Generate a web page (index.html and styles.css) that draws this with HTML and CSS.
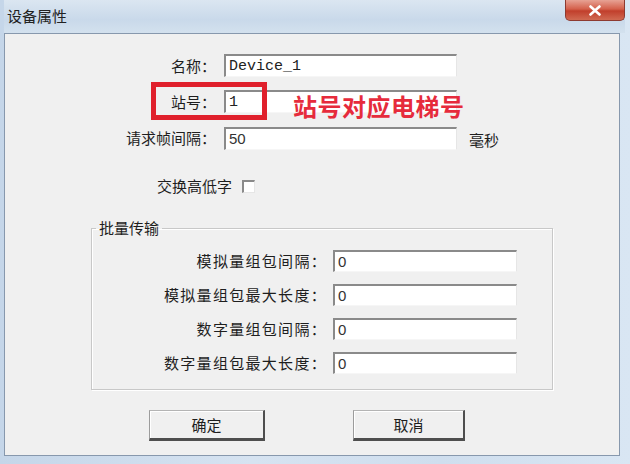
FILE: index.html
```html
<!DOCTYPE html>
<html lang="zh-CN">
<head>
  <meta charset="UTF-8">
  <title>设备属性</title>
  <link rel="stylesheet" href="styles.css">
</head>
<body>
  <div class="window">
    <div class="titlebar">
      <span class="title">设备属性</span>
      <button class="close" type="button">
        <svg width="14" height="11" viewBox="0 0 14 11"><path d="M2.5 1.5 L11.5 9.5 M11.5 1.5 L2.5 9.5" stroke="#fff" stroke-width="2.6" stroke-linecap="round"/></svg>
      </button>
    </div>
    <div class="client">
      <div class="form-top">
        <label class="label">名称：</label>
        <input class="field mono" type="text" value="Device_1">
        <span></span>

        <label class="label">站号：</label>
        <input class="field mono" type="text" value="1">
        <span></span>

        <label class="label">请求帧间隔：</label>
        <input class="field" type="text" value="50">
        <span class="unit">毫秒</span>

        <!-- annotation drawn over the dialog -->
        <div class="mark-box"></div>
        <div class="mark-text">站号对应电梯号</div>
      </div>

      <div class="swap-row">
        <span>交换高低字</span>
        <span class="check"></span>
      </div>

      <fieldset class="group">
        <legend>批量传输</legend>
        <div class="group-grid">
          <label class="label wide">模拟量组包间隔：</label>
          <input class="field" type="text" value="0">
          <label class="label wide">模拟量组包最大长度：</label>
          <input class="field" type="text" value="0">
          <label class="label wide">数字量组包间隔：</label>
          <input class="field" type="text" value="0">
          <label class="label wide">数字量组包最大长度：</label>
          <input class="field" type="text" value="0">
        </div>
      </fieldset>

      <div class="actions">
        <button class="btn ok" type="button">确定</button>
        <button class="btn cancel" type="button">取消</button>
      </div>
    </div>
  </div>
</body>
</html>
```

FILE: styles.css
```css
body {
  margin: 0;
  width: 630px;
  height: 464px;
  overflow: hidden;
  font-family: "Noto Sans CJK SC", "Liberation Sans", sans-serif;
  color: #1e1e1e;
}

.window {
  width: 630px;
  height: 464px;
  box-sizing: border-box;
  display: flex;
  flex-direction: column;
  padding: 0 10px 8px 4px;
  background: linear-gradient(90deg, #c5d6e9 0%, #d6e3f1 40%, #cfdeee 70%, #d9e6f3 100%);
}

.titlebar {
  height: 33px;
  display: flex;
  justify-content: space-between;
  align-items: flex-start;
  margin-right: -5px;
  background: linear-gradient(180deg, #dbe6f1 0%, #c9d9ea 60%, #d3e1ee 100%);
}

.title {
  margin: 6px 0 0 3px;
  font-size: 15px;
  line-height: 20px;
  color: #222;
}

.close {
  width: 60px;
  height: 21px;
  padding: 0;
  border: 1px solid #8d3a30;
  border-top: none;
  border-radius: 0 0 5px 5px;
  background: linear-gradient(180deg, #e7a294 0%, #d4604b 45%, #c13f2c 55%, #d06a52 100%);
  display: flex;
  align-items: center;
  justify-content: center;
}

.client {
  flex: 1;
  background: #f0f0f0;
  border: 1px solid #8798ad;
}

.label {
  font-size: 15px;
  line-height: 20px;
  text-align: right;
  white-space: nowrap;
  margin-right: -4px;
}

.label.wide {
  letter-spacing: 1.3px;
}

.field {
  box-sizing: border-box;
  height: 23px;
  margin: 0;
  padding: 0 0 0 3px;
  background: #fff;
  border-top: 2px solid #8a8a8a;
  border-left: 2px solid #8a8a8a;
  border-right: 1px solid #e6e6e6;
  border-bottom: 1px solid #f6f6f6;
  font-family: "Liberation Sans", sans-serif;
  font-size: 15px;
  color: #333;
  outline: none;
}

.field.mono {
  font-family: "Liberation Mono", monospace;
  color: #222;
}

.form-top {
  position: relative;
  display: grid;
  grid-template-columns: 207px 233px auto;
  column-gap: 12px;
  row-gap: 13px;
  align-items: center;
  padding-top: 20px;
}

.unit {
  font-size: 15px;
  line-height: 20px;
  padding-top: 4px;
}

.mark-box {
  position: absolute;
  left: 146px;
  top: 48px;
  width: 116px;
  height: 38px;
  box-sizing: border-box;
  border: 5px solid #e0202c;
}

.mark-text {
  position: absolute;
  left: 288px;
  top: 57px;
  font-size: 24px;
  line-height: 30px;
  font-weight: bold;
  color: #e62b3c;
  letter-spacing: 0.5px;
}

.swap-row {
  display: flex;
  align-items: center;
  gap: 10px;
  margin: 26px 0 0 152px;
  font-size: 15px;
  line-height: 20px;
}

.check {
  width: 10px;
  height: 10px;
  background: #fff;
  border-top: 2px solid #8a8a8a;
  border-left: 2px solid #8a8a8a;
  border-right: 1px solid #e6e6e6;
  border-bottom: 1px solid #e6e6e6;
}

.group {
  width: 462px;
  box-sizing: border-box;
  margin: 22px 0 0 86px;
  padding: 12px 0 15px 0;
  border: 1px solid #c8c8c8;
  box-shadow: inset 1px 1px #fff, 1px 1px #fff;
}

.group legend {
  margin-left: 4px;
  padding: 0 3px;
  font-size: 15px;
  line-height: 20px;
}

.group-grid {
  display: grid;
  grid-template-columns: 231px 184px;
  column-gap: 10px;
  row-gap: 12px;
  align-items: center;
}

.group-grid .field {
  height: 22px;
}

.actions {
  display: flex;
  gap: 88px;
  margin: 20px 0 0 144px;
}

.btn {
  height: 31px;
  padding: 0;
  background: #f0f0f0;
  border-top: 1px solid #b4b4b4;
  border-left: 1px solid #9c9c9c;
  border-right: 2px solid #4e4e4e;
  border-bottom: 3px solid #4e4e4e;
  box-shadow: inset 1px 1px #fff;
  font-family: "Noto Sans CJK SC", sans-serif;
  font-size: 15px;
  color: #1e1e1e;
}

.ok {
  width: 116px;
}

.cancel {
  width: 112px;
}
```
